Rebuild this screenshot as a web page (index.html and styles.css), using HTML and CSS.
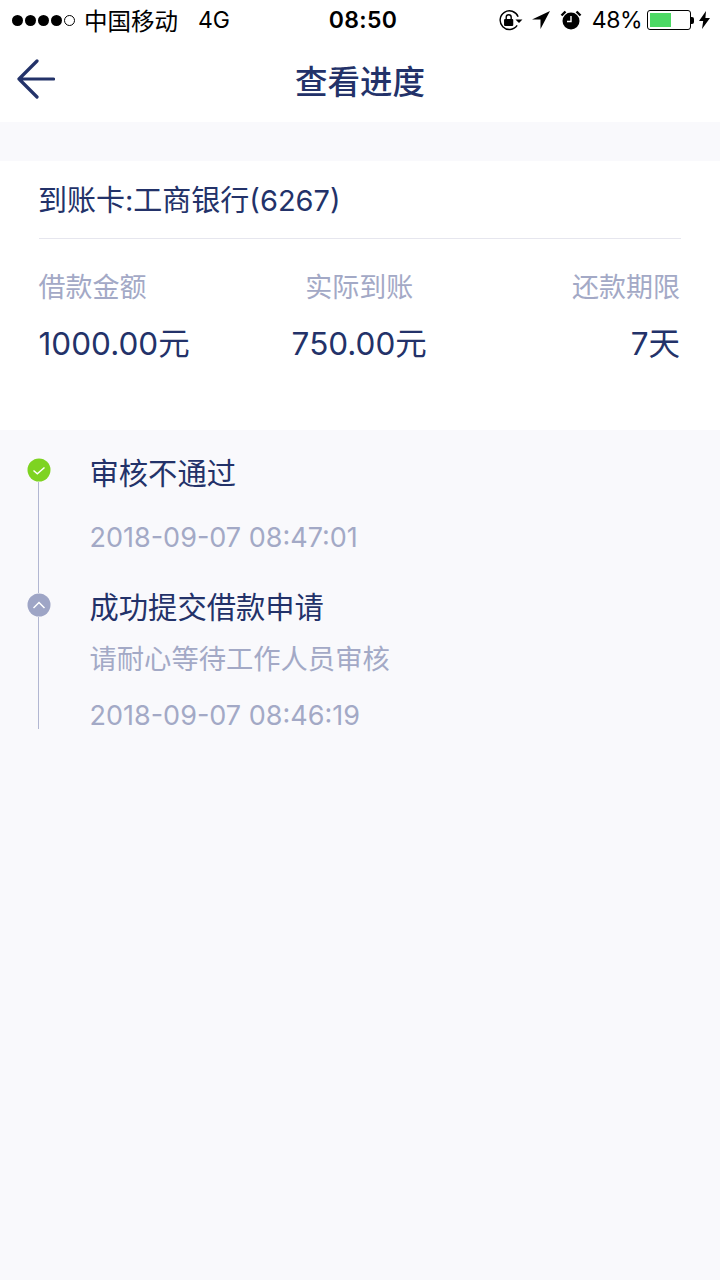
FILE: index.html
```html
<!DOCTYPE html>
<html lang="zh-CN">
<head>
    <meta charset="UTF-8">
    <meta name="viewport" content="width=device-width, initial-scale=1.0">
    <title>查看进度</title>
    <link rel="stylesheet" href="styles.css">
</head>
<body>
    <div class="status-bar">
        <div class="status-left">
            <span class="signal"><i></i><i></i><i></i><i></i><i class="empty"></i></span>
            <span class="carrier">中国移动</span>
            <span class="network">4G</span>
        </div>
        <div class="status-time">08:50</div>
        <div class="status-right">
            <svg class="ico-lock" width="26" height="22" viewBox="0 0 24 20">
                <path d="M19.5 7A8.6 8.6 0 1 0 18.6 15" fill="none" stroke="#000" stroke-width="1.3"/>
                <path d="M17 9.500h6.500l-3.200 3.200z" fill="#000"/>
                <rect x="6.500" y="9" width="8.500" height="6.500" rx="1" fill="#000"/>
                <path d="M8.500 9.500V7.500a2.300 2.300 0 0 1 4.600 0v2" fill="none" stroke="#000" stroke-width="1.300"/>
            </svg>
            <svg class="ico-loc" width="18" height="18" viewBox="0 0 18 18">
                <path d="M18 0 0 8.600h8.500V18z" fill="#000"/>
            </svg>
            <svg class="ico-alarm" width="22" height="20" viewBox="0 0 22 20">
                <circle cx="11" cy="11" r="8.500" fill="#000"/>
                <path d="M11 6v5.500H7" fill="none" stroke="#fff" stroke-width="1.400"/>
                <path d="M1.500 5.500 5.500 1.500M20.500 5.500 16.500 1.500" stroke="#000" stroke-width="2.400"/>
            </svg>
            <span class="battery-pct">48%</span>
            <span class="battery"><span class="battery-fill"></span></span>
            <span class="battery-cap"></span>
            <svg class="ico-bolt" width="11" height="18" viewBox="0 0 11 18">
                <path d="M7 0 0 10h4.200L3 18l8-11H6.400z" fill="#000"/>
            </svg>
        </div>
    </div>

    <div class="nav-bar">
        <svg class="back" width="38" height="40" viewBox="0 0 38 40">
            <path d="M20 2 2 20l18 18M2 20h34.500" fill="none" stroke="#233269" stroke-width="3.200" stroke-linecap="round" stroke-linejoin="round"/>
        </svg>
        <h1 class="nav-title">查看进度</h1>
    </div>

    <div class="card">
        <div class="card-head">到账卡:工商银行(6267)</div>
        <div class="amounts">
            <div class="amount">
                <div class="amount-label">借款金额</div>
                <div class="amount-value">1000.00元</div>
            </div>
            <div class="amount center">
                <div class="amount-label">实际到账</div>
                <div class="amount-value">750.00元</div>
            </div>
            <div class="amount right">
                <div class="amount-label">还款期限</div>
                <div class="amount-value">7天</div>
            </div>
        </div>
    </div>

    <div class="timeline">
        <div class="step step-first">
            <div class="marker">
                <svg class="dot" width="24" height="24" viewBox="0 0 24 24">
                    <circle cx="12" cy="12" r="11.500" fill="#7ed321"/>
                    <path d="M6.500 12.500l3.800 3.200L17.500 9.500" fill="none" stroke="#fff" stroke-width="1.500"/>
                </svg>
                <div class="line"></div>
            </div>
            <div class="step-body">
                <div class="step-title">审核不通过</div>
                <div class="step-time">2018-09-07 08:47:01</div>
            </div>
        </div>
        <div class="step step-second">
            <div class="marker">
                <svg class="dot" width="24" height="24" viewBox="0 0 24 24">
                    <circle cx="12" cy="12" r="11.500" fill="#9ea5c6"/>
                    <path d="M6.500 15l5.500-5.500 5.500 5.500" fill="none" stroke="#fff" stroke-width="1.500"/>
                </svg>
                <div class="line"></div>
            </div>
            <div class="step-body">
                <div class="step-title">成功提交借款申请</div>
                <div class="step-note">请耐心等待工作人员审核</div>
                <div class="step-time">2018-09-07 08:46:19</div>
            </div>
        </div>
    </div>
</body>
</html>
```

FILE: styles.css
```css
* {
    box-sizing: border-box;
}

body {
    margin: 0;
    height: 1280px;
    overflow: hidden;
    background-color: #f9f9fc;
    font-family: Inter, "Noto Sans CJK SC", sans-serif;
    color: #233269;
}

.status-bar {
    display: flex;
    justify-content: space-between;
    align-items: center;
    height: 40px;
    padding: 0 10px 0 12px;
    background-color: #fff;
    color: #000;
    font-size: 23.500px;
}

.status-left,
.status-right {
    display: flex;
    align-items: center;
    width: 240px;
}

.status-right {
    justify-content: flex-end;
}

.signal {
    display: flex;
    gap: 2px;
}

.signal i {
    width: 11px;
    height: 11px;
    border-radius: 50%;
    background-color: #000;
}

.signal i.empty {
    background-color: transparent;
    border: 1px solid #000;
}

.carrier {
    margin-left: 9px;
    margin-top: -1px;
}

.network {
    margin-left: 20px;
    font-size: 23px;
}

.status-time {
    margin-left: 4px;
    font-size: 23px;
    font-weight: 600;
    letter-spacing: 0.300px;
}

.ico-lock {
    margin-right: 9px;
}

.ico-loc {
    margin-right: 10px;
}

.ico-alarm {
    margin-right: 10px;
}

.battery-pct {
    margin-right: 5px;
    font-size: 23px;
    letter-spacing: -0.500px;
}

.battery {
    display: block;
    width: 44px;
    height: 20px;
    padding: 2px;
    border: 1px solid #000;
    border-radius: 3px;
}

.battery-fill {
    display: block;
    width: 21px;
    height: 100%;
    background-color: #4cd964;
}

.battery-cap {
    width: 3px;
    height: 7px;
    margin-right: 5px;
    background-color: #000;
    border-radius: 0 2px 2px 0;
}

.nav-bar {
    position: relative;
    display: flex;
    justify-content: center;
    align-items: center;
    height: 82px;
    padding-bottom: 4px;
    background-color: #fff;
}

.back {
    position: absolute;
    left: 17px;
    top: 19px;
}

.nav-title {
    margin: 0;
    font-size: 32.500px;
    font-weight: 500;
}

.card {
    margin-top: 39px;
    height: 269px;
    padding: 0 39px;
    background-color: #fff;
}

.card-head {
    height: 78px;
    padding-top: 20px;
    border-bottom: 1px solid #e6e6ee;
    font-size: 29px;
    line-height: 40px;
    text-indent: -1px;
}

.amounts {
    display: flex;
    justify-content: space-between;
    margin: 0 1px 0 -0.500px;
    padding-top: 29px;
}

.amount {
    flex: 1;
}

.amount.center {
    text-align: center;
}

.amount.right {
    text-align: right;
}

.amount-label {
    font-size: 27px;
    line-height: 40px;
    color: #a3a9c6;
}

.amount-value {
    margin-top: 16px;
    font-size: 31.500px;
    line-height: 40px;
}

.timeline {
    padding: 28px 0 0 27px;
}

.step {
    display: flex;
}

.step-first {
    height: 135px;
}

.step-second {
    height: 136px;
}

.step-second .step-body {
    margin-top: -1px;
}

.marker {
    display: flex;
    flex-direction: column;
    align-items: center;
    width: 23px;
}

.dot {
    flex: none;
}

.line {
    flex: 1;
    width: 1px;
    background-color: #b2b7d2;
}

.step-body {
    margin-left: 39.500px;
}

.step-title {
    font-size: 29.300px;
    line-height: 32px;
}

.step-note {
    margin-top: 20px;
    font-size: 27.300px;
    line-height: 32px;
    color: #a3a9c6;
}

.step-time {
    font-size: 27px;
    line-height: 32px;
    color: #a3a9c6;
}

.step-first .step-time {
    margin-top: 32px;
}

.step-second .step-time {
    margin-top: 24px;
}
```
